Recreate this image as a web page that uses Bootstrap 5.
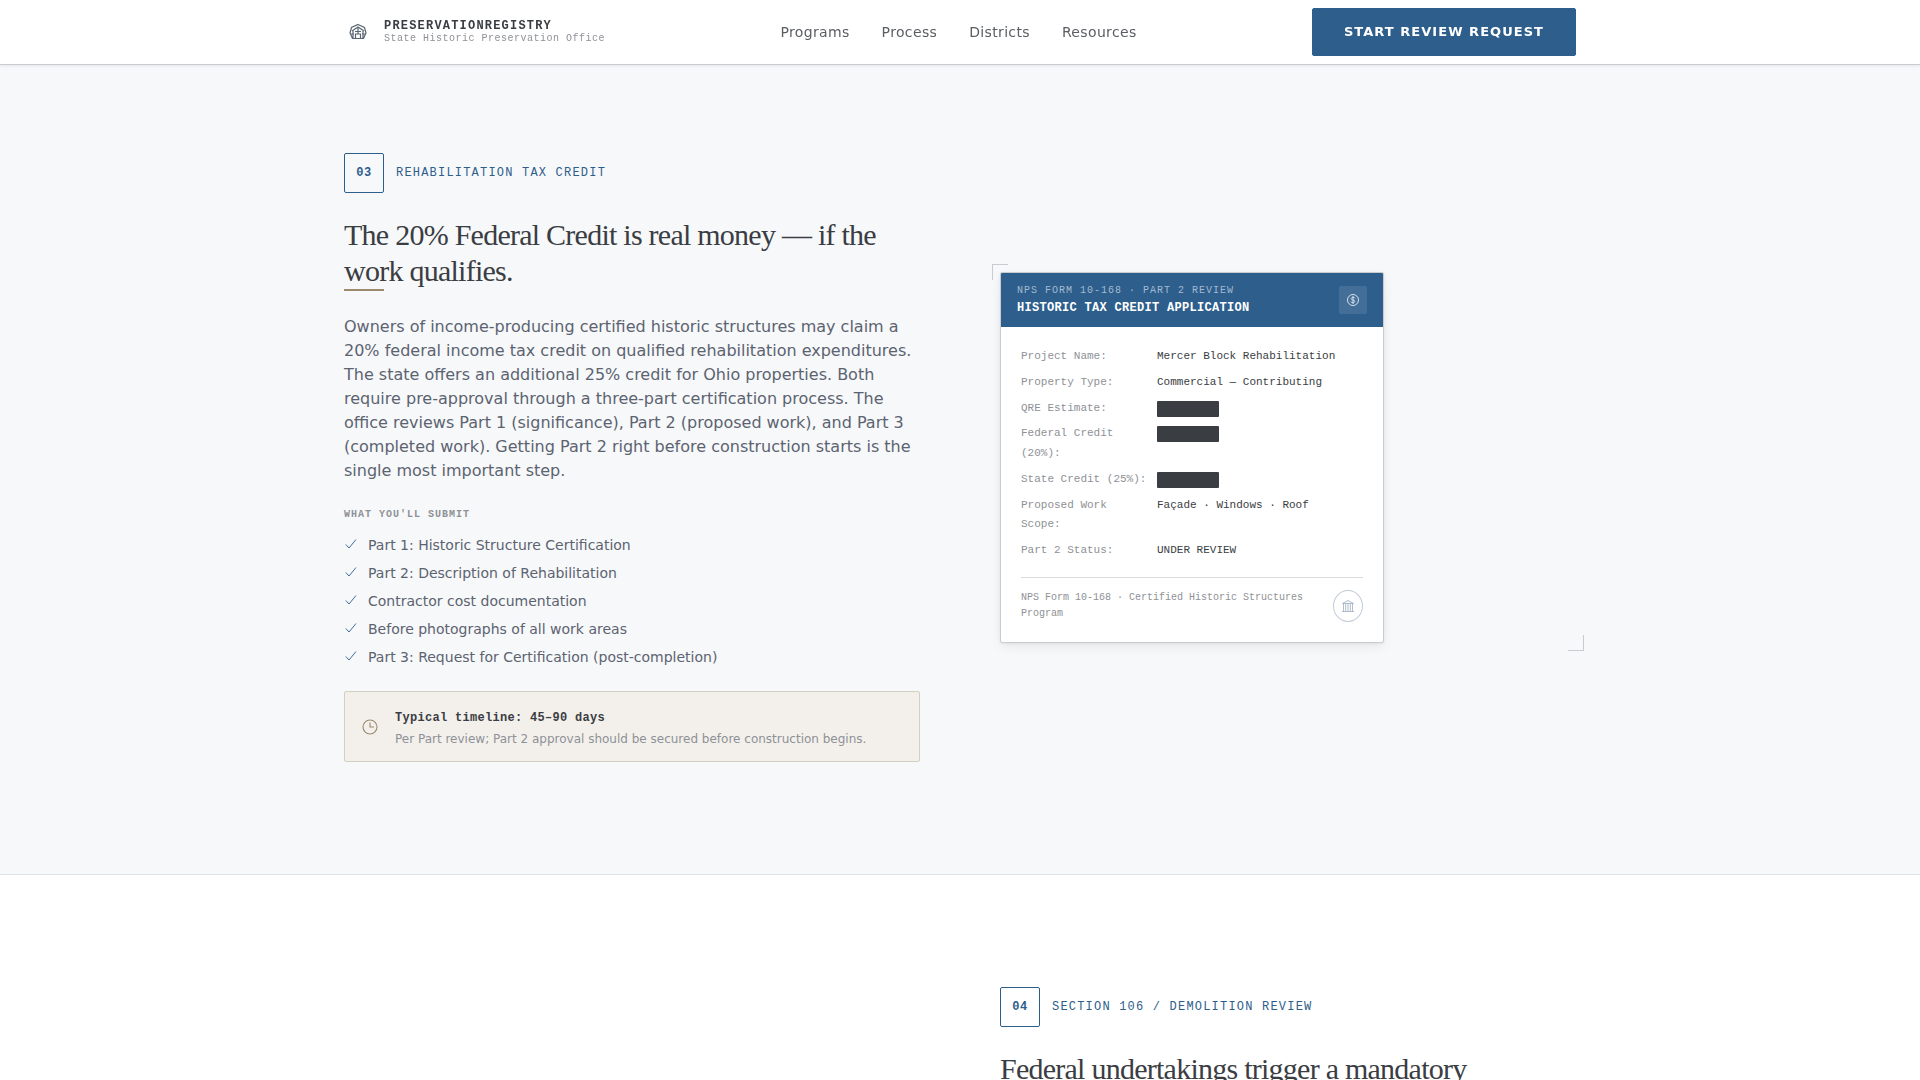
<!DOCTYPE html>
<html lang="en">
<head>
<meta charset="utf-8">
<meta name="viewport" content="width=device-width, initial-scale=1">
<title>PreservationRegistry</title>
<link href="https://cdn.jsdelivr.net/npm/bootstrap@5.3.0/dist/css/bootstrap.min.css" rel="stylesheet">
<style>
:root{--navy:#2d5e8c;--ink:#3a3d42;--body:#5c6370;--muted:#8e9196;--line:#c9cccf}
body{font-family:"DejaVu Sans",sans-serif;color:var(--body);background:#fff}
.mono{font-family:"Liberation Mono",monospace}
.wrap{max-width:1280px;padding-left:24px;padding-right:24px}
.site-head{height:65px;border-bottom:1px solid var(--line);box-shadow:0 1px 3px rgba(0,0,0,.08);z-index:2}
.brand-link,.step-head{gap:12px}
.logo-box{width:28px;height:28px}
.brand-name{font-size:12px;line-height:14px;letter-spacing:.1em;color:var(--ink)}
.brand-sub{font-size:10px;line-height:12px;letter-spacing:.05em;color:var(--muted)}
.main-nav{gap:32px}
.main-nav a{font-size:14px;letter-spacing:.025em;color:#5a5d62}
.btn-navy{--bs-btn-color:#fff;--bs-btn-bg:var(--navy);--bs-btn-border-color:var(--navy);--bs-btn-hover-color:#fff;--bs-btn-hover-bg:#234b73;height:48px;padding:0 31px;font-size:13px;letter-spacing:.08em;border-radius:2px}
.program{border-bottom:1px solid #dfe2e4}
.program.tinted{background:#f7f8fa;padding:88px 0 112px}
.program.plain{padding-top:112px}
.two-col{--bs-gutter-x:80px}
.step-no{width:40px;height:40px;border:1px solid var(--navy);border-radius:2px;color:var(--navy);font-size:12px;letter-spacing:.05em}
.step-label{font-size:12px;letter-spacing:.1em;color:var(--navy)}
.program h2{font-family:"Liberation Serif",serif;font-size:30px;line-height:36px;letter-spacing:-.025em;color:var(--ink);font-weight:400;margin:24px 0}
.program h2.ruled::after{content:"";display:block;width:40px;height:2px;background:#9b8a6c}
.list-title{font-size:10px;line-height:16px;letter-spacing:.1em;color:var(--muted);margin-bottom:12px}
.submit-list{font-size:14px;line-height:20px}
.check-row{gap:10px}
.check-row svg{margin-top:2px}
.note{background:#f3f0ec;border:1px solid #d2d0c0;border-radius:2px;padding:14px 16px}
.note-title{font-size:12px;line-height:24px;letter-spacing:.025em;color:var(--ink)}
.note-text{font-size:12px;line-height:16px;color:var(--muted);margin-top:1px}
.frame::before,.frame::after{content:"";position:absolute;width:16px;height:16px;border:0 solid var(--line)}
.frame::before{left:-8px;top:-8px;border-width:1px 0 0 1px}
.frame::after{right:-8px;bottom:-8px;border-width:0 1px 1px 0}
.form-sheet{max-width:384px;background:#fff;border:1px solid var(--line);border-radius:2px;box-shadow:0 4px 12px rgba(0,0,0,.06),0 1px 3px rgba(0,0,0,.06);overflow:hidden}
.sheet-head{background:var(--navy);padding:9px 16px}
.sheet-kicker{font-size:10px;line-height:17px;letter-spacing:.1em;color:#a3bad0}
.sheet-title{font-size:12px;line-height:19px;letter-spacing:.025em;color:#fff}
.sheet-icon{width:28px;height:28px;border-radius:2px;background:rgba(255,255,255,.1)}
.sheet-body{padding:20px}
.field-list{font-size:11px;line-height:1.8;gap:6px}
.field-list dt{width:128px;font-weight:400;color:var(--muted)}
.field-list dd{color:var(--ink)}
.redacted{width:62px;height:16px;background:var(--ink);border-radius:1px;margin-top:2px}
.sheet-foot{margin-top:16px;padding-top:12px;border-top:1px solid #d9dbdd;font-size:10px;line-height:16px;color:var(--muted)}
.seal{width:30px;height:32px;border:1px solid #c0cad6;border-radius:50%}
</style>
</head>
<body class="vh-100 overflow-hidden">
<header class="site-head sticky-top bg-white">
 <div class="container-fluid wrap d-flex align-items-center justify-content-between h-100">
  <a href="#" class="brand-link d-flex align-items-center text-decoration-none">
   <span class="logo-box d-flex align-items-center justify-content-center flex-shrink-0">
    <svg width="18" height="18" viewBox="0 0 18 18" fill="none" stroke="#5b6672" stroke-width="1.200"><path d="M9 1.500 15.500 4.500 17 10l-2.500 5.500h-11L1 10l1.500-5.500zM3 8l6-4 6 4M4 8v7.500M14 8v7.500M6.500 15.500V11h5v4.500M6 8.500h6M9 5v6M2 11h3M13 11h3"/></svg>
   </span>
   <span class="d-flex flex-column mono"><span class="brand-name fw-bold">PRESERVATIONREGISTRY</span><span class="brand-sub">State Historic Preservation Office</span></span>
  </a>
  <nav class="main-nav d-flex" aria-label="Main">
   <a class="text-decoration-none" href="#">Programs</a><a class="text-decoration-none" href="#">Process</a><a class="text-decoration-none" href="#">Districts</a><a class="text-decoration-none" href="#">Resources</a>
  </nav>
  <button type="button" class="btn btn-navy fw-bold">START REVIEW REQUEST</button>
 </div>
</header>
<main>
 <section class="program tinted">
  <div class="container-fluid wrap">
   <div class="row two-col align-items-center">
    <div class="col-6">
     <div class="step-head d-flex align-items-center mono"><span class="step-no fw-bold d-flex align-items-center justify-content-center">03</span><span class="step-label">REHABILITATION TAX CREDIT</span></div>
     <h2 class="ruled">The 20% Federal Credit is real money — if the work qualifies.</h2>
     <p class="mb-4">Owners of income-producing certified historic structures may claim a 20% federal income tax credit on qualified rehabilitation expenditures. The state offers an additional 25% credit for Ohio properties. Both require pre-approval through a three-part certification process. The office reviews Part 1 (significance), Part 2 (proposed work), and Part 3 (completed work). Getting Part 2 right before construction starts is the single most important step.</p>
     <h3 class="list-title mono fw-bold">WHAT YOU'LL SUBMIT</h3>
     <svg class="d-none"><symbol id="tick" viewBox="0 0 14 14"><path d="M1.800 7.500 5 11l7-8.500" fill="none" stroke="#2d5e8c" stroke-width=".9"/></symbol></svg>
     <ul class="submit-list list-unstyled d-flex flex-column gap-2 mb-4">
      <li class="d-flex check-row"><svg width="14" height="14"><use href="#tick"/></svg><span>Part 1: Historic Structure Certification</span></li>
      <li class="d-flex check-row"><svg width="14" height="14"><use href="#tick"/></svg><span>Part 2: Description of Rehabilitation</span></li>
      <li class="d-flex check-row"><svg width="14" height="14"><use href="#tick"/></svg><span>Contractor cost documentation</span></li>
      <li class="d-flex check-row"><svg width="14" height="14"><use href="#tick"/></svg><span>Before photographs of all work areas</span></li>
      <li class="d-flex check-row"><svg width="14" height="14"><use href="#tick"/></svg><span>Part 3: Request for Certification (post-completion)</span></li>
     </ul>
     <div class="note d-flex align-items-center gap-3">
      <svg width="18" height="18" viewBox="0 0 18 18" fill="none" stroke="#9b8a6c" stroke-width="1.100"><circle cx="9" cy="9" r="7"/><path d="M9 4.500V9h4"/></svg>
      <div><div class="note-title mono fw-bold">Typical timeline: 45–90 days</div><div class="note-text">Per Part review; Part 2 approval should be secured before construction begins.</div></div>
     </div>
    </div>
    <div class="col-6">
     <div class="frame position-relative">
      <article class="form-sheet">
       <div class="sheet-head d-flex align-items-center justify-content-between">
        <div class="mono"><div class="sheet-kicker">NPS FORM 10-168 · PART 2 REVIEW</div><div class="sheet-title fw-bold">HISTORIC TAX CREDIT APPLICATION</div></div>
        <span class="sheet-icon d-flex align-items-center justify-content-center"><svg width="14" height="14" viewBox="0 0 14 14" fill="none" stroke="#d5e0ea"><circle cx="7" cy="7" r="5.500"/><path d="M9 5.400C8.700 4.600 8 4.400 7 4.400c-2.400 0-2.400 2.600 0 2.600s2.500 2.700 0 2.700c-1.200 0-1.900-.4-2.100-1.200M7 3v8"/></svg></span>
       </div>
       <div class="sheet-body mono">
        <dl class="field-list d-flex flex-column mb-0">
         <div class="d-flex gap-2"><dt>Project Name:</dt><dd class="mb-0">Mercer Block Rehabilitation</dd></div>
         <div class="d-flex gap-2"><dt>Property Type:</dt><dd class="mb-0">Commercial — Contributing</dd></div>
         <div class="d-flex gap-2"><dt>QRE Estimate:</dt><dd class="redacted mb-0"></dd></div>
         <div class="d-flex gap-2"><dt>Federal Credit (20%):</dt><dd class="redacted mb-0"></dd></div>
         <div class="d-flex gap-2"><dt>State Credit (25%):</dt><dd class="redacted mb-0"></dd></div>
         <div class="d-flex gap-2"><dt>Proposed Work Scope:</dt><dd class="mb-0">Façade · Windows · Roof</dd></div>
         <div class="d-flex gap-2"><dt>Part 2 Status:</dt><dd class="mb-0">UNDER REVIEW</dd></div>
        </dl>
        <div class="sheet-foot d-flex align-items-center justify-content-between"><span>NPS Form 10-168 · Certified Historic Structures Program</span>
         <span class="seal d-flex align-items-center justify-content-center flex-shrink-0"><svg width="14" height="14" viewBox="0 0 14 14" fill="none" stroke="#a6b6ca" stroke-width=".9"><path d="M1.500 4.500 7 1.500l5.500 3zM1 12.500h12M2.500 4.500v8M4.700 5v7.500M7 5v7.500M9.300 5v7.500M11.500 4.500v8"/></svg></span></div>
       </div>
      </article>
     </div>
    </div>
   </div>
  </div>
 </section>
 <section class="program plain">
  <div class="container-fluid wrap">
   <div class="row two-col">
    <div class="col-6 offset-6">
     <div class="step-head d-flex align-items-center mono"><span class="step-no fw-bold d-flex align-items-center justify-content-center">04</span><span class="step-label">SECTION 106 / DEMOLITION REVIEW</span></div>
     <h2>Federal undertakings trigger a mandatory</h2>
    </div>
   </div>
  </div>
 </section>
</main>
<script src="https://cdn.jsdelivr.net/npm/bootstrap@5.3.0/dist/js/bootstrap.bundle.min.js"></script>
</body>
</html>
